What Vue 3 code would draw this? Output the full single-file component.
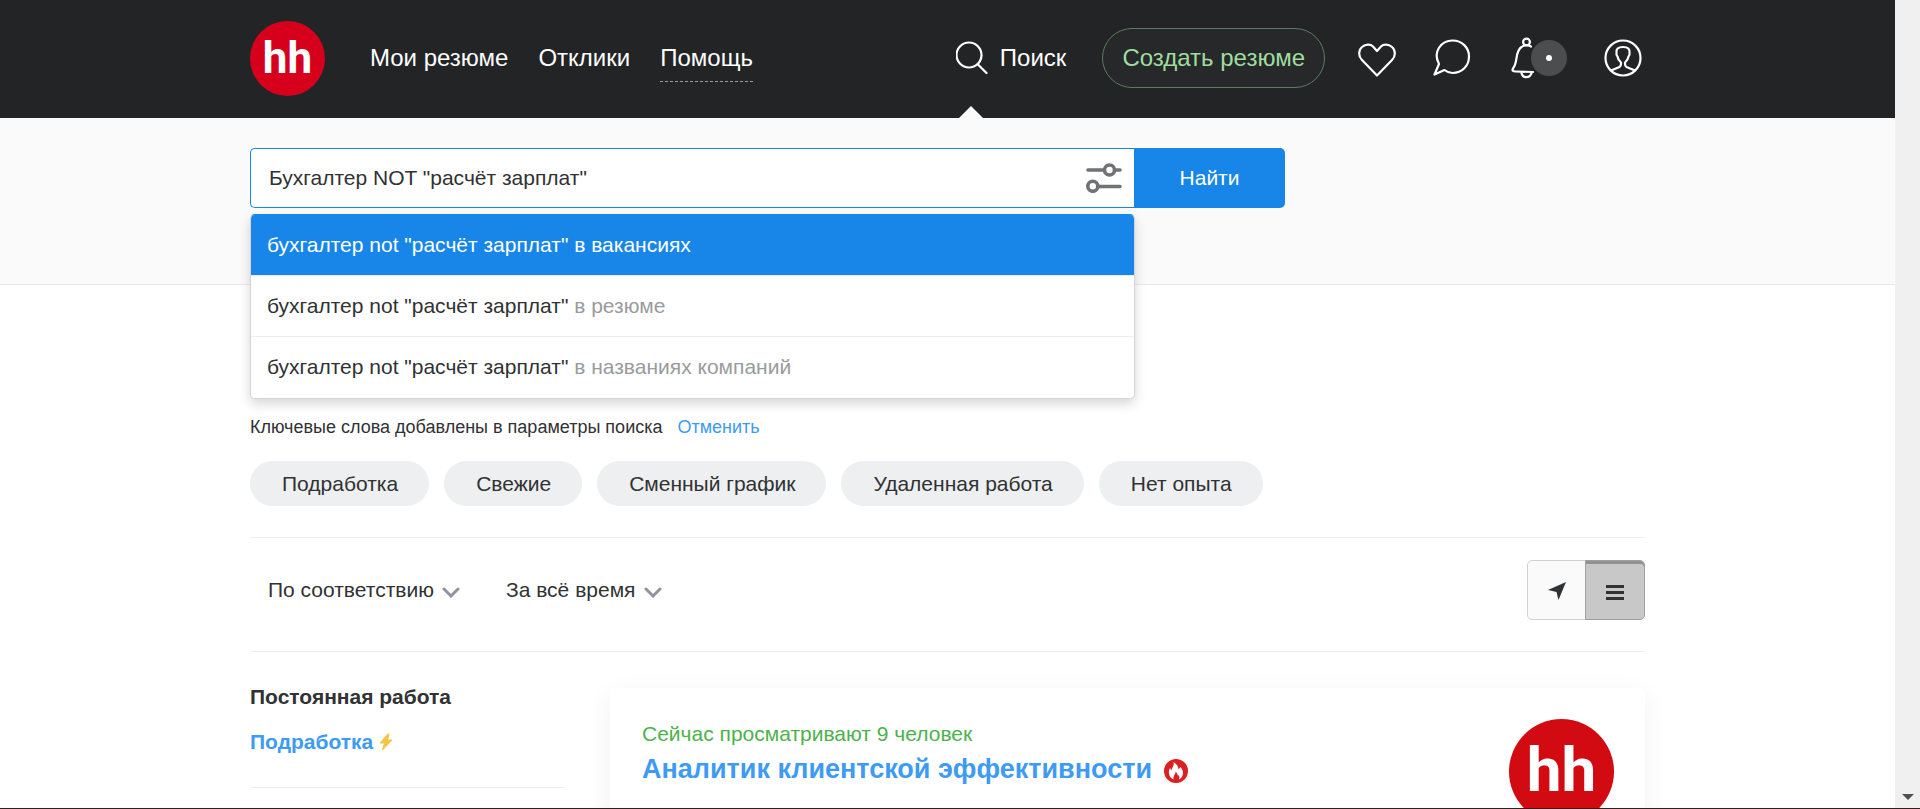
<script setup>
import { ref } from 'vue'

const query = ref('Бухгалтер NOT "расчёт зарплат"')
const phrase = 'бухгалтер not "расчёт зарплат"'
const scopes = ['в вакансиях', 'в резюме', 'в названиях компаний']
const active = ref(0)
const chips = ['Подработка', 'Свежие', 'Сменный график', 'Удаленная работа', 'Нет опыта']
const view = ref('list')
</script>

<template>
  <div class="window">
    <div class="viewport">
      <div class="page">
        <header class="header">
          <div class="container header-row">
            <a class="logo" href="#">hh</a>
            <nav class="nav">
              <a href="#">Мои резюме</a>
              <a href="#">Отклики</a>
              <a href="#" class="dashed">Помощь</a>
            </nav>
            <a class="search-link" href="#">
              <svg class="loupe" width="32" height="34" viewBox="0 0 32 34" fill="none" stroke="#fff" stroke-width="2.2" stroke-linecap="round">
                <circle cx="13" cy="14" r="12.5" />
                <path d="M22 23.5 L30.5 32" />
              </svg>
              <span>Поиск</span>
              <i class="pointer"></i>
            </a>
            <button class="create" type="button">Создать резюме</button>
            <div class="tools">
              <a href="#" aria-label="Избранное">
                <svg width="38" height="38" viewBox="0 0 38 38" fill="none" stroke="#fff" stroke-width="2.2" stroke-linejoin="round">
                  <path d="M19 36.500 L4 21 C0 17 .5 11 4 8 C7.500 5 12.500 5 15 7.500 L19 12 L23 7.500 C25.500 5 30.500 5 34 8 C37.500 11 38 17 34 21 Z" />
                </svg>
              </a>
              <a href="#" aria-label="Сообщения">
                <svg width="38" height="40" viewBox="0 0 38 40" fill="none" stroke="#fff" stroke-width="2.2" stroke-linejoin="round">
                  <path d="M1.500 36.500 L6 26 C-.5 14 8 2.500 19.500 2.500 C29 2.500 36 9.500 36 18.500 C36 28 29 35 19.500 35 C17 35 14 34 11.500 32 Z" />
                </svg>
              </a>
              <a href="#" aria-label="Уведомления" class="bell">
                <svg width="24" height="42" viewBox="0 0 24 42" fill="none" stroke="#fff" stroke-width="2.2" stroke-linecap="round" stroke-linejoin="round">
                  <circle cx="15.500" cy="5" r="3.400" />
                  <path d="M20 9.500 C17 8 13 8 10.500 10 C3.500 15 7.500 24 2 31.500 C.8 33.500 2 34.500 4.500 34.500 L22 35" />
                  <path d="M10.500 36 C11.500 41.500 19 41.500 20.500 36" />
                </svg>
                <span class="badge"></span>
              </a>
              <a href="#" aria-label="Профиль">
                <svg width="38" height="38" viewBox="0 0 38 38" fill="none" stroke="#fff" stroke-width="2.200" stroke-linejoin="round">
                  <circle cx="19" cy="19" r="17.500" />
                  <path d="M7 31.500 L15.500 28 Q17 27 17 25 V23.500 Q14 21 13.500 17.500 Q12 16 12.500 14 Q11.500 8 19 8 Q26.500 8 25.500 14 Q26 16 24.500 17.500 Q24 21 21 23.500 V25 Q21 27 22.500 28 L31 31.500" />
                </svg>
              </a>
            </div>
          </div>
        </header>

        <section class="search">
          <div class="container">
            <form class="search-form" @submit.prevent>
              <div class="field">
                <input v-model="query" type="text" aria-label="Поисковый запрос" />
                <button class="filter" type="button" aria-label="Фильтры">
                  <svg width="36" height="30" viewBox="0 0 36 30" fill="none" stroke="#6f7376" stroke-width="3.600" stroke-linecap="round">
                    <path d="M2 7 H18 M29 7 H34 M12 23.500 H34" />
                    <circle cx="23.500" cy="7" r="5" />
                    <circle cx="6.800" cy="23.300" r="5" />
                  </svg>
                </button>
                <ul class="suggest">
                  <li v-for="(scope, i) in scopes" :key="scope">
                    <button type="button" :class="{ active: i === active }" @mouseenter="active = i">
                      {{ phrase }} <span>{{ scope }}</span>
                    </button>
                  </li>
                </ul>
              </div>
              <button class="submit" type="submit">Найти</button>
            </form>
          </div>
        </section>

        <main class="container">
          <p class="notice">Ключевые слова добавлены в параметры поиска <a href="#">Отменить</a></p>
          <div class="chips">
            <button v-for="chip in chips" :key="chip" type="button">{{ chip }}</button>
          </div>

          <div class="toolbar">
            <div class="drop">
              <select aria-label="Сортировка"><option>По соответствию</option></select>
              <svg width="18" height="12" viewBox="0 0 18 12" fill="none" stroke="#8f949c" stroke-width="3" stroke-linecap="round"><path d="M2 2 L9 9 L16 2" /></svg>
            </div>
            <div class="drop">
              <select aria-label="Период"><option>За всё время</option></select>
              <svg width="18" height="12" viewBox="0 0 18 12" fill="none" stroke="#8f949c" stroke-width="3" stroke-linecap="round"><path d="M2 2 L9 9 L16 2" /></svg>
            </div>
            <div class="views">
              <button type="button" aria-label="На карте" :class="{ on: view === 'map' }" @click="view = 'map'">
                <svg width="18" height="18" viewBox="0 0 18 18" fill="#303233"><path d="M18 0 L10.500 18 L8.500 10 L0 8 Z" /></svg>
              </button>
              <button type="button" aria-label="Списком" :class="{ on: view === 'list' }" @click="view = 'list'">
                <svg width="18" height="16" viewBox="0 0 18 16" fill="#303233"><path d="M0 0 H18 V3 H0 Z M0 6 H18 V9 H0 Z M0 12 H18 V15 H0 Z" /></svg>
              </button>
            </div>
          </div>

          <div class="columns">
            <aside class="side">
              <strong>Постоянная работа</strong>
              <a href="#">Подработка
                <svg width="14" height="18" viewBox="0 0 14 18" fill="#f2c544" stroke="#f2c544" stroke-linejoin="round"><path d="M9 1 L1 10 H5.500 L3.500 17 L13 7 H8.500 L10 1 Z" /></svg>
              </a>
            </aside>
            <article class="card">
              <div class="card-text">
                <p>Сейчас просматривают 9 человек</p>
                <h2>
                  <a href="#">Аналитик клиентской эффективности</a>
                  <svg width="24" height="24" viewBox="0 0 24 24">
                    <circle cx="12" cy="12" r="12" fill="#d92121" />
                    <path fill="#fff" d="M9.500 20.500 C4.500 18 4 12.500 6 9 L7.500 11.500 C8 8 10.500 7 9.500 3 C13 5 14.500 8 14.500 10.500 L16.500 8 C20.500 12.500 19.500 18 15 20.500 C15.500 19 15.500 17.500 15 16 L14 17 C13.800 15.500 12.800 13.500 11.500 12.500 C12 15 9 16 9.500 20.500 Z" />
                  </svg>
                </h2>
              </div>
              <a class="logo big" href="#">hh</a>
            </article>
          </div>
        </main>
      </div>
      <div class="scrollbar"><i></i></div>
    </div>
    <div class="edge"></div>
  </div>
</template>

<style>
body {
  background: #fff;
}
</style>

<style scoped>
* {
  box-sizing: border-box;
}
.window {
  height: 100vh;
  display: flex;
  flex-direction: column;
  overflow: hidden;
  font: 21px/30px "Liberation Sans", Arial, sans-serif;
  color: #303233;
}
.viewport {
  flex: 1;
  min-height: 0;
  display: flex;
}
.page {
  flex: 1;
  min-width: 0;
  overflow: hidden;
}
.scrollbar {
  width: 25px;
  background: #f0f0f0;
  display: flex;
  align-items: flex-end;
  justify-content: center;
  padding-bottom: 8px;
}
.scrollbar i {
  border: 6px solid transparent;
  border-top-color: #505050;
  border-bottom: 0;
}
.edge {
  height: 1px;
  background: #3a1a1e;
}
.container {
  max-width: 1395px;
  margin: 0 auto;
}
a {
  text-decoration: none;
  color: #3d9bf5;
}
button {
  font: inherit;
  color: inherit;
  border: 0;
  padding: 0;
  background: none;
  cursor: pointer;
}
svg {
  display: block;
  flex: none;
}
p,
h2,
ul {
  margin: 0;
  padding: 0;
}

.header {
  background: #232426;
  font-size: 24px;
}
.header-row {
  height: 118px;
  padding-bottom: 2px;
  display: flex;
  align-items: center;
}
.header a {
  color: #fff;
}
.logo {
  width: 75px;
  height: 75px;
  border-radius: 50%;
  background: #d6001c;
  color: #fff;
  display: flex;
  align-items: center;
  justify-content: center;
  flex: none;
  font: 700 44px/1 Roboto, "Liberation Sans", sans-serif;
}
.nav {
  display: flex;
  gap: 30px;
  margin-left: 45px;
  margin-right: auto;
}
.nav a {
  line-height: 46px;
  border-bottom: 1px dashed transparent;
}
.nav .dashed {
  border-color: #9a9a9b;
}
.search-link {
  align-self: stretch;
  display: flex;
  align-items: center;
  gap: 12px;
  position: relative;
}
.pointer {
  position: absolute;
  left: 3px;
  bottom: -2px;
  border: 12px solid transparent;
  border-bottom-color: #fafafa;
  border-top: 0;
}
.create {
  height: 60px;
  margin-left: 36px;
  padding: 0 19px;
  border: 1px solid #5c7d61;
  border-radius: 30px;
  background: #262829;
  color: #a0dca0;
  white-space: nowrap;
}
.tools {
  display: flex;
  align-items: center;
  gap: 37px;
  margin-left: 33px;
  margin-right: 3px;
}
.bell {
  display: flex;
  align-items: center;
  margin: 0 0 0 3px;
}
.badge {
  width: 36px;
  height: 36px;
  margin-left: -4px;
  border-radius: 50%;
  background: #4c4d4f;
  display: flex;
  align-items: center;
  justify-content: center;
}
.badge::after {
  content: "";
  width: 6px;
  height: 6px;
  border-radius: 50%;
  background: #fff;
}

.search {
  background: #fafafa;
  border-bottom: 1px solid #e9eaeb;
  padding: 30px 0 76px;
}
.search-form {
  display: flex;
  max-width: 1035px;
}
.field {
  flex: 1;
  height: 60px;
  display: flex;
  align-items: center;
  position: relative;
  background: #fff;
  border: 1px solid #1886e8;
  border-right: 0;
  border-radius: 5px 0 0 5px;
}
.field input {
  flex: 1;
  min-width: 0;
  height: 100%;
  border: 0;
  outline: 0;
  background: none;
  padding: 0 18px;
  font: inherit;
  color: inherit;
}
.filter {
  margin-right: 12px;
}
.submit {
  width: 151px;
  border-radius: 0 5px 5px 0;
  background: #1886e8;
  color: #fff;
}
.suggest {
  position: absolute;
  top: 65px;
  left: -1px;
  right: -1px;
  z-index: 2;
  list-style: none;
  padding-bottom: 1px;
  background: #fff;
  border: 1px solid #d3d5d7;
  border-top-color: #1886e8;
  border-radius: 5px;
  box-shadow: 0 5px 12px rgba(0, 0, 0, 0.16);
  overflow: hidden;
}
.suggest li + li {
  border-top: 1px solid #eceef0;
}
.suggest button {
  width: 100%;
  height: 60px;
  padding: 0 16px;
  text-align: left;
  display: block;
}
.suggest span {
  color: #999b9d;
}
.suggest .active,
.suggest .active span {
  background: #1886e8;
  color: #fff;
}

.notice {
  padding-top: 127px;
  font-size: 18px;
}
.notice a {
  margin-left: 10px;
}
.chips {
  display: flex;
  flex-wrap: wrap;
  gap: 15px;
  padding: 19px 0 31px;
  border-bottom: 1px solid #eceeef;
}
.chips button {
  height: 45px;
  padding: 0 31px 0 32px;
  border-radius: 23px;
  background: #edeff0;
}
.toolbar {
  display: flex;
  align-items: center;
  gap: 46px;
  padding: 22px 0 31px 18px;
  border-bottom: 1px solid #eceeef;
}
.drop {
  position: relative;
}
.drop select {
  appearance: none;
  border: 0;
  background: none;
  font: inherit;
  color: inherit;
  padding: 0 26px 0 0;
}
.drop svg {
  position: absolute;
  right: 0;
  top: 12px;
  pointer-events: none;
}
.views {
  display: flex;
  margin-left: auto;
}
.views button {
  width: 59px;
  height: 60px;
  padding-top: 2px;
  display: flex;
  align-items: center;
  justify-content: center;
  background: #fafafa;
  border: 1px solid #d0d3d6;
  border-radius: 5px 0 0 5px;
}
.views button + button {
  width: 60px;
  margin-left: -1px;
  border-radius: 0 5px 5px 0;
}
.views .on {
  padding-top: 6px;
  background: #c8c8c8;
  border-color: #a0a0a0;
  box-shadow: inset 0 3px #929292;
}

.columns {
  display: flex;
  align-items: flex-start;
  gap: 45px;
  padding-top: 30px;
}
.side {
  width: 315px;
  flex: none;
  display: flex;
  flex-direction: column;
  gap: 15px;
  font-weight: 700;
  padding-bottom: 30px;
  border-bottom: 1px solid #eceeef;
}
.side a {
  display: flex;
  align-items: center;
  gap: 6px;
}
.card {
  flex: 1;
  min-height: 240px;
  margin-top: 6px;
  padding: 31px 31px 31px 32px;
  display: flex;
  justify-content: space-between;
  border-radius: 6px;
  background: #fff;
  box-shadow: 0 6px 24px rgba(0, 20, 20, 0.06);
}
.card p {
  color: #4bb34b;
}
.card h2 {
  display: flex;
  align-items: center;
  gap: 12px;
  font-size: 27px;
  line-height: 40px;
}
.card h2 svg {
  margin-top: 4px;
}
.big {
  width: 105px;
  height: 105px;
  padding-bottom: 4px;
  background: #d20a11;
  font-size: 62px;
}
</style>
